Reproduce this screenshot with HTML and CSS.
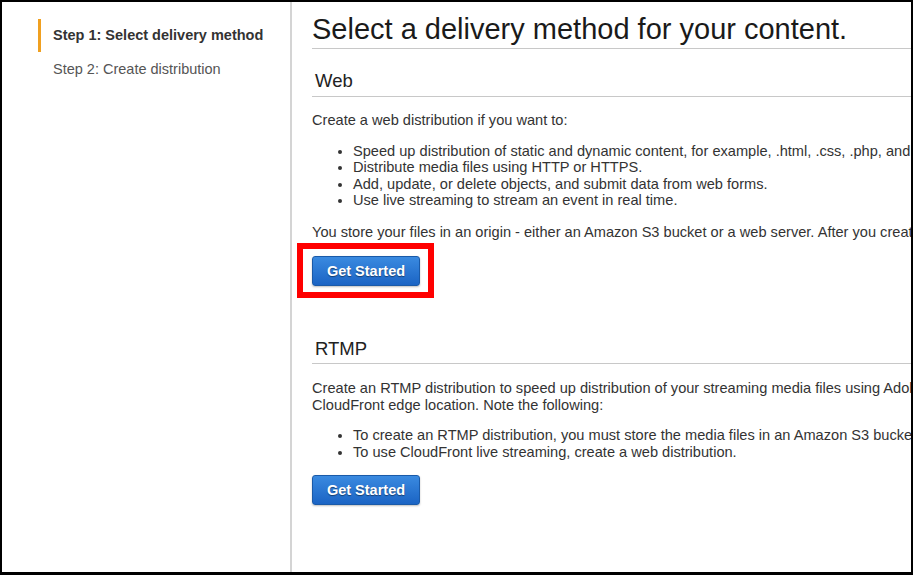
FILE: index.html
```html
<!DOCTYPE html>
<html>
<head>
<meta charset="utf-8">
<link rel="stylesheet" href="styles.css">
</head>
<body>
<div class="frame">
  <aside class="sidebar">
    <div class="step active">Step 1: Select delivery method</div>
    <div class="step">Step 2: Create distribution</div>
  </aside>
  <main class="main">
    <h1 class="title">Select a delivery method for your content.</h1>
    <section class="method">
      <h2 class="method-title">Web</h2>
      <p class="text">Create a web distribution if you want to:</p>
      <ul class="list">
        <li>Speed up distribution of static and dynamic content, for example, .html, .css, .php, and graphics files.</li>
        <li>Distribute media files using HTTP or HTTPS.</li>
        <li>Add, update, or delete objects, and submit data from web forms.</li>
        <li>Use live streaming to stream an event in real time.</li>
      </ul>
      <p class="text">You store your files in an origin - either an Amazon S3 bucket or a web server. After you create the distribution, you can add more origins to the distribution.</p>
      <div class="highlight">
        <button class="btn">Get Started</button>
      </div>
    </section>
    <section class="method rtmp">
      <h2 class="method-title">RTMP</h2>
      <p class="text">Create an RTMP distribution to speed up distribution of your streaming media files using Adobe Flash Media Server's RTMP protocol. An RTMP distribution allows an end user to begin playing a media file before the file has finished downloading from a<br>CloudFront edge location. Note the following:</p>
      <ul class="list">
        <li>To create an RTMP distribution, you must store the media files in an Amazon S3 bucket.</li>
        <li>To use CloudFront live streaming, create a web distribution.</li>
      </ul>
      <div class="plain">
        <button class="btn">Get Started</button>
      </div>
    </section>
  </main>
</div>
</body>
</html>
```
FILE: styles.css
```css
* { box-sizing: border-box; }
html, body { margin: 0; padding: 0; background: #000; }
.frame {
  width: 913px;
  height: 575px;
  border-style: solid;
  border-color: #000;
  border-width: 2px 2px 3px 2px;
  background: #fff;
  display: flex;
  overflow: hidden;
  font-family: "Liberation Sans", Arial, sans-serif;
  color: #333;
}
.sidebar {
  width: 290px;
  flex: none;
  border-right: 2px solid #d4d4d4;
  padding-top: 17px;
  padding-left: 36px;
}
.step {
  font-size: 14.5px;
  color: #555;
  padding: 0 0 0 15px;
  line-height: 17px;
}
.step.active {
  font-weight: bold;
  color: #333;
  border-left: 3px solid #f0a020;
  padding: 8px 0 8px 12px;
  margin-bottom: 9px;
}
.main {
  flex: none;
  width: 1200px;
  padding-left: 20px;
  padding-top: 0;
}
.title {
  font-size: 29px;
  font-weight: normal;
  color: #1a1a1a;
  margin: 0;
  padding-top: 10px;
  line-height: 34px;
  padding-bottom: 2px;
  border-bottom: 1px solid #c8c8c8;
  width: 1000px;
}
.method-title {
  font-size: 18.5px;
  font-weight: normal;
  color: #222;
  margin: 0;
  padding: 21px 0 4px 3px;
  line-height: 22px;
  border-bottom: 1px solid #c8c8c8;
  width: 1000px;
}
.rtmp .method-title { padding-top: 0; padding-bottom: 3px; }
.rtmp { margin-top: 40px; }
.text {
  font-size: 14.6px;
  line-height: 16.5px;
  margin: 15px 0 0 0;
  white-space: nowrap;
}
.rtmp .text { margin-top: 16px; }
.list {
  font-size: 14.6px;
  line-height: 16.5px;
  margin: 14px 0 0 0;
  padding-left: 41px;
  white-space: nowrap;
}
.highlight {
  margin: 3px 0 0 -15px;
  width: 137px;
  height: 55px;
  border: 6px solid #f00;
  display: flex;
  align-items: center;
  padding-left: 9px;
}
.plain { margin-top: 15px; }
.btn {
  width: 108px;
  height: 30px;
  border: 1px solid #1a5aa8;
  border-radius: 3px;
  background: linear-gradient(#3a8ae0, #1b64c4);
  color: #fff;
  font-family: "Liberation Sans", Arial, sans-serif;
  font-weight: bold;
  font-size: 14.5px;
  text-shadow: 0 1px 1px rgba(0,0,0,0.45);
  box-shadow: 0 1px 2px rgba(0,0,0,0.25);
  padding: 0;
}
```
